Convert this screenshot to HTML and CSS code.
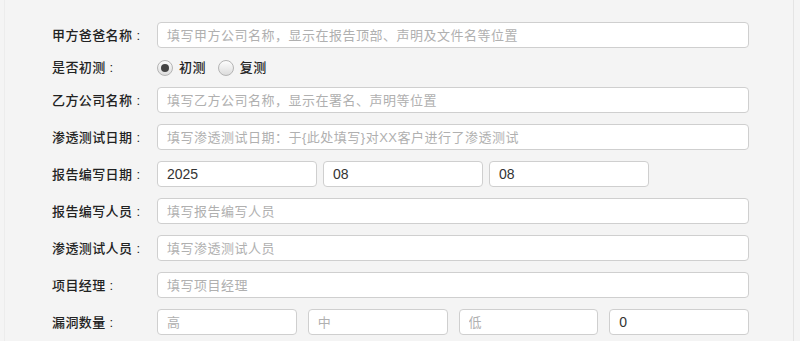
FILE: index.html
```html
<!DOCTYPE html>
<html lang="zh-CN">
<head>
  <meta charset="UTF-8">
  <title>报告信息</title>
  <meta name="viewport" content="width=device-width, initial-scale=1.0">
  <link rel="stylesheet" href="styles.css">
</head>
<body>
  <div class="panel">
    <form class="report-form">
      <label class="field-label">甲方爸爸名称 :</label>
      <div class="field"><input type="text" placeholder="填写甲方公司名称，显示在报告顶部、声明及文件名等位置"></div>

      <label class="field-label">是否初测 :</label>
      <div class="field radios">
        <label class="radio"><input type="radio" name="first" checked><span>初测</span></label>
        <label class="radio"><input type="radio" name="first"><span>复测</span></label>
      </div>

      <label class="field-label">乙方公司名称 :</label>
      <div class="field"><input type="text" placeholder="填写乙方公司名称，显示在署名、声明等位置"></div>

      <label class="field-label">渗透测试日期 :</label>
      <div class="field"><input type="text" placeholder="填写渗透测试日期：于{此处填写}对XX客户进行了渗透测试"></div>

      <label class="field-label">报告编写日期 :</label>
      <div class="field date-group">
        <input type="text" value="2025">
        <input type="text" value="08">
        <input type="text" value="08">
      </div>

      <label class="field-label">报告编写人员 :</label>
      <div class="field"><input type="text" placeholder="填写报告编写人员"></div>

      <label class="field-label">渗透测试人员 :</label>
      <div class="field"><input type="text" placeholder="填写渗透测试人员"></div>

      <label class="field-label">项目经理 :</label>
      <div class="field"><input type="text" placeholder="填写项目经理"></div>

      <label class="field-label">漏洞数量 :</label>
      <div class="field vuln-group">
        <input type="text" placeholder="高">
        <input type="text" placeholder="中">
        <input type="text" placeholder="低">
        <input type="text" value="0">
      </div>
    </form>
  </div>
</body>
</html>
```

FILE: styles.css
```css
body {
  margin: 0;
  background-color: #f4f4f4;
  font-family: "Liberation Sans", "Noto Sans CJK SC", sans-serif;
  color: #333;
}
.panel {
  margin: 0 6px 0 4px;
  height: 341px;
  border-left: 1px solid #ececec;
  border-right: 1px solid #e4e4e4;
  background-color: #f4f4f4;
  padding-top: 22px;
  box-sizing: border-box;
}
.report-form {
  display: grid;
  grid-template-columns: 105px 592px;
  row-gap: 11px;
  margin-left: 47px;
}
.field-label {
  display: flex;
  align-items: center;
  font-size: 13px;
  line-height: 17px;
  font-weight: 500;
  color: #222;
  letter-spacing: 0.4px;
  white-space: pre;
}
.field {
  display: flex;
}
.field input[type="text"] {
  flex: 1;
  min-width: 0;
  height: 26px;
  box-sizing: border-box;
  padding: 0 9px;
  border: 1px solid #cfcfcf;
  border-radius: 4px;
  background-color: #fff;
  font-family: "Liberation Sans", "Noto Sans CJK SC", sans-serif;
  font-size: 14px;
  color: #333;
  outline: none;
}
.field input::placeholder {
  color: #b0b0b0;
  font-size: 13px;
  letter-spacing: 0.5px;
}
.date-group {
  gap: 6px;
}
.date-group input[type="text"] {
  flex: 0 0 160px;
}
.vuln-group {
  gap: 11px;
}
.radios {
  height: 17px;
  align-items: center;
  gap: 12px;
}
.radio {
  display: flex;
  align-items: center;
  gap: 6px;
  font-size: 13px;
  line-height: 17px;
  font-weight: 500;
  letter-spacing: 0.4px;
  color: #222;
}
.radio input {
  appearance: none;
  margin: 0;
  width: 16px;
  height: 16px;
  border: 1px solid #b4b4b4;
  border-radius: 50%;
  background: linear-gradient(#fdfdfd, #dcdcdc);
  position: relative;
}
.radio input:checked::after {
  content: "";
  position: absolute;
  top: 3px;
  left: 3px;
  width: 8px;
  height: 8px;
  border-radius: 50%;
  background-color: #444;
}
```
